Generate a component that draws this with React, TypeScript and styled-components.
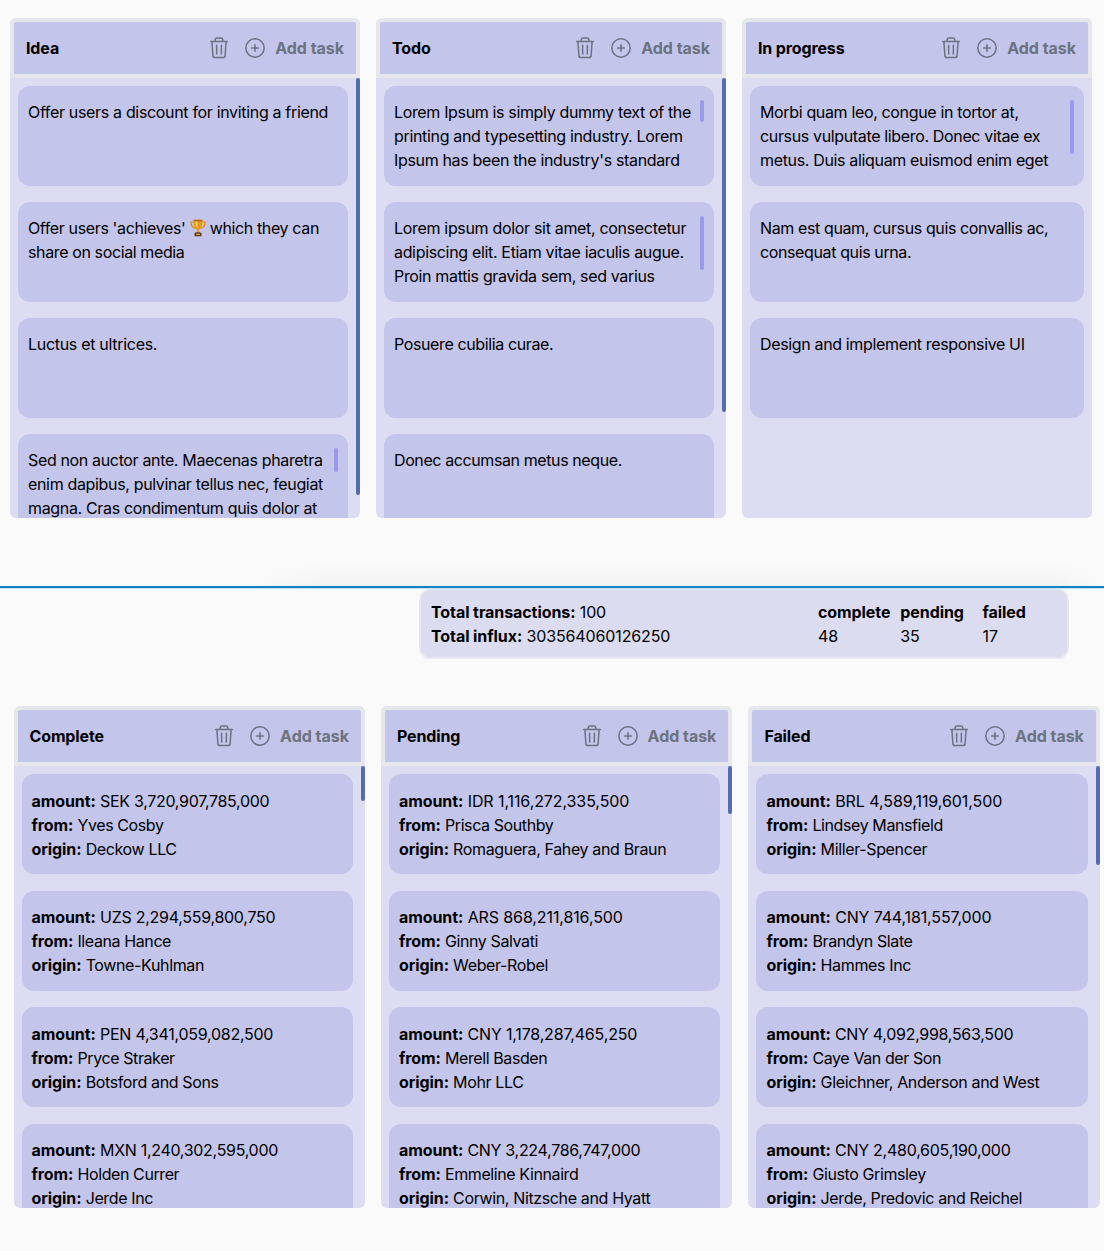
import React from 'react';
import styled, { createGlobalStyle } from 'styled-components';

const GlobalStyle = createGlobalStyle`
  *, *::before, *::after { box-sizing: border-box; }
  body {
    margin: 0;
    background: #fafafa;
    color: #000;
    font-family: Inter, "Liberation Sans", sans-serif;
    font-size: 16px;
    line-height: 24px;
    overflow: hidden;
  }
`;

const Page = styled.main`
  width: 1104px;
  height: 1251px;
  display: flex;
  flex-direction: column;
`;

const Upper = styled.section`
  height: 586px;
  flex: none;
  padding: 17.5px 0 0 10px;
  display: flex;
  flex-direction: column;
  justify-content: space-between;
`;

const Shade = styled.div`
  height: 24px;
  margin-left: 240px;
  background: linear-gradient(to right, #fafafa, rgba(250, 250, 250, 0) 9%, rgba(250, 250, 250, 0) 94%, #fafafa),
    linear-gradient(to bottom, #fafafa, #f7f7f7 50%, #f2f2f2);
`;

const Divider = styled.hr`
  flex: none;
  width: 100%;
  height: 3px;
  margin: 0;
  border: 0;
  border-bottom: 1px solid #c4e0f0;
  background: #1482c5;
`;

const Lower = styled.section`
  display: flex;
  flex-direction: column;
`;

const Board = styled.div<{ $gap: number }>`
  display: flex;
  gap: ${(p) => p.$gap}px;
`;

const LowerBoard = styled(Board)`
  padding: 47px 0 0 13.5px;
`;

const ColumnBox = styled.section<{ $w: number; $h: number }>`
  flex: none;
  width: ${(p) => p.$w}px;
  height: ${(p) => p.$h}px;
  display: flex;
  flex-direction: column;
  overflow: hidden;
  border-radius: 6px;
  background: #dcdcf2;
`;

const Head = styled.header`
  flex: none;
  height: 60px;
  display: flex;
  align-items: center;
  padding: 0 12px;
  border: 4px solid #e5e7eb;
  border-radius: 6px 6px 0 0;
  background: #c4c5eb;
  font-weight: 700;
`;

const Title = styled.h2`
  flex: 1;
  margin: 0;
  font-size: 16px;
  font-weight: 700;
  letter-spacing: -0.13px;
  white-space: nowrap;
`;

const IconButton = styled.button`
  display: flex;
  padding: 0;
  border: 0;
  background: none;
  color: #6b7280;
`;

const AddButton = styled(IconButton)`
  align-items: center;
  gap: 8px;
  margin-left: 12px;
  font: inherit;
  letter-spacing: -0.03px;
  white-space: nowrap;
`;

const Glyph = styled.svg`
  width: 24px;
  height: 24px;
  fill: none;
  stroke: currentColor;
  stroke-width: 1.5;
  stroke-linecap: round;
  stroke-linejoin: round;
`;

const Body = styled.div`
  flex: 1;
  min-height: 0;
  position: relative;
  overflow: hidden;
`;

const Cards = styled.div<{ $gap: number; $bar: boolean }>`
  display: flex;
  flex-direction: column;
  gap: ${(p) => p.$gap}px;
  padding: 8px ${(p) => (p.$bar ? 12 : 8)}px 0 8px;
`;

const Thumb = styled.span<{ $h: number }>`
  position: absolute;
  top: 0;
  right: 0;
  width: 4px;
  height: ${(p) => p.$h}px;
  border-radius: 2px;
  background: #566cb1;
`;

const CardBox = styled.article<{ $top: number }>`
  flex: none;
  height: 100px;
  padding: ${(p) => p.$top}px 10px 0;
  border-radius: 12px;
  background: #c4c5eb;
`;

const CardText = styled.div<{ $lh: number }>`
  position: relative;
  height: 72px;
  line-height: ${(p) => p.$lh}px;
`;

const CardThumb = styled(Thumb)`
  background: #9a9bef;
`;

const Line = styled.div<{ $t?: number }>`
  letter-spacing: ${(p) => p.$t ?? -0.35}px;
  white-space: nowrap;
`;

const Label = styled.b`
  font-weight: 700;
  letter-spacing: -0.08px;
`;

const Trophy = styled.svg`
  width: 16px;
  height: 18px;
  vertical-align: -3px;
`;

const Summary = styled.section`
  width: 650px;
  height: 70px;
  margin-left: 419px;
  padding: 10px 10px;
  display: grid;
  grid-template-columns: 387px 82.3px 82.3px 60px;
  border: 2px solid #e8e8ee;
  border-top-width: 1px;
  border-radius: 11px;
  background: #dcdcf0;
`;

const TrashIcon = () => (
  <Glyph viewBox="0 0 24 24">
    <path d="M3.700 5.400H20.300M8.200 5.200V4.100C8.200 2.800 8.900 2.100 10.100 2.100h3.800c1.200 0 1.900.7 1.900 2v1.100M4.900 5.600l1 14c.1 1.200.9 2 2.100 2h8c1.200 0 2-.8 2.100-2L19.100 5.600M9.600 9.200l.1 8.700M14.400 9.200l-.1 8.700" />
  </Glyph>
);

const PlusIcon = () => (
  <Glyph viewBox="0 0 24 24">
    <circle cx="12" cy="12" r="9.200" />
    <path d="M12 8.700v6.600M8.700 12h6.600" />
  </Glyph>
);

const TrophyIcon = () => (
  <Trophy viewBox="0 0 16 18">
    <path d="M4 3H1c0 4 1.500 6 4.500 6.500M12 3h3c0 4-1.500 6-4.500 6.500" fill="none" stroke="#d98a12" strokeWidth="1.200" />
    <path d="M3.300 1.300h9.400c0 5-1 8.200-3.600 9.200v2.500H6.900v-2.500C4.300 9.500 3.300 6.300 3.300 1.300z" fill="#e99a14" />
    <path d="M5.500 2c0 3 .4 5.500 1.800 7V2z" fill="#ffd65a" />
    <ellipse cx="8" cy="1.500" rx="4.700" ry="0.900" fill="#b96b10" />
    <path d="M4.500 17.200v-3l1.500-1h4l1.500 1v3z" fill="#5b3a20" />
    <path d="M6.200 14.700h3.600v1.300H6.200z" fill="#e8ad35" />
  </Trophy>
);

type TextLine = [React.ReactNode, number?];
type Card = { lines: TextLine[]; thumb?: number };
type ColumnData = { title: string; thumb?: number; cards: Card[] };

const tasks: ColumnData[] = [
  {
    title: 'Idea',
    thumb: 417,
    cards: [
      { lines: [['Offer users a discount for inviting a friend', -0.33]] },
      { lines: [[<>Offer users 'achieves' <TrophyIcon /> which they can</>, -0.37], ['share on social media', -0.38]] },
      { lines: [['Luctus et ultrices.', -0.3]] },
      {
        thumb: 24,
        lines: [
          ['Sed non auctor ante. Maecenas pharetra'],
          ['enim dapibus, pulvinar tellus nec, feugiat', -0.34],
          ['magna. Cras condimentum quis dolor at', -0.34],
        ],
      },
    ],
  },
  {
    title: 'Todo',
    thumb: 334,
    cards: [
      {
        thumb: 22,
        lines: [
          ['Lorem Ipsum is simply dummy text of the'],
          ['printing and typesetting industry. Lorem', -0.33],
          ["Ipsum has been the industry's standard", -0.34],
        ],
      },
      {
        thumb: 54,
        lines: [
          ['Lorem ipsum dolor sit amet, consectetur', -0.32],
          ['adipiscing elit. Etiam vitae iaculis augue.', -0.33],
          ['Proin mattis gravida sem, sed varius', -0.34],
        ],
      },
      { lines: [['Posuere cubilia curae.', -0.38]] },
      { lines: [['Donec accumsan metus neque.', -0.4]] },
    ],
  },
  {
    title: 'In progress',
    cards: [
      {
        thumb: 54,
        lines: [
          ['Morbi quam leo, congue in tortor at,'],
          ['cursus vulputate libero. Donec vitae ex'],
          ['metus. Duis aliquam euismod enim eget', -0.34],
        ],
      },
      { lines: [['Nam est quam, cursus quis convallis ac,', -0.38], ['consequat quis urna.', -0.38]] },
      { lines: [['Design and implement responsive UI', -0.35]] },
    ],
  },
];

const payment = (amount: string, from: string, origin: string, amountSpacing = -0.3): Card => ({
  lines: [
    [<><Label>amount:</Label> {amount}</>, amountSpacing],
    [<><Label>from:</Label> {from}</>, -0.4],
    [<><Label>origin:</Label> {origin}</>, -0.36],
  ],
});

const payments: ColumnData[] = [
  {
    title: 'Complete',
    thumb: 35,
    cards: [
      payment('SEK 3,720,907,785,000', 'Yves Cosby', 'Deckow LLC'),
      payment('UZS 2,294,559,800,750', 'Ileana Hance', 'Towne-Kuhlman', -0.27),
      payment('PEN 4,341,059,082,500', 'Pryce Straker', 'Botsford and Sons', -0.26),
      payment('MXN 1,240,302,595,000', 'Holden Currer', 'Jerde Inc'),
    ],
  },
  {
    title: 'Pending',
    thumb: 48,
    cards: [
      payment('IDR 1,116,272,335,500', 'Prisca Southby', 'Romaguera, Fahey and Braun', -0.09),
      payment('ARS 868,211,816,500', 'Ginny Salvati', 'Weber-Robel', -0.11),
      payment('CNY 1,178,287,465,250', 'Merell Basden', 'Mohr LLC', -0.18),
      payment('CNY 3,224,786,747,000', 'Emmeline Kinnaird', 'Corwin, Nitzsche and Hyatt'),
    ],
  },
  {
    title: 'Failed',
    thumb: 99,
    cards: [
      payment('BRL 4,589,119,601,500', 'Lindsey Mansfield', 'Miller-Spencer', -0.06),
      payment('CNY 744,181,557,000', 'Brandyn Slate', 'Hammes Inc', -0.14),
      payment('CNY 4,092,998,563,500', 'Caye Van der Son', 'Gleichner, Anderson and West'),
      payment('CNY 2,480,605,190,000', 'Giusto Grimsley', 'Jerde, Predovic and Reichel', -0.25),
    ],
  },
];

type ColumnProps = { data: ColumnData; w: number; h: number; gap: number; lh: number; top: number };

const Column = ({ data, w, h, gap, lh, top }: ColumnProps) => (
  <ColumnBox $w={w} $h={h}>
    <Head>
      <Title>{data.title}</Title>
      <IconButton aria-label="Delete column"><TrashIcon /></IconButton>
      <AddButton><PlusIcon />Add task</AddButton>
    </Head>
    <Body>
      <Cards $gap={gap} $bar={data.thumb !== undefined}>
        {data.cards.map((card, i) => (
          <CardBox key={i} $top={top}>
            <CardText $lh={lh}>
              {card.lines.map(([text, t], j) => <Line key={j} $t={t}>{text}</Line>)}
              {card.thumb && <CardThumb $h={card.thumb} />}
            </CardText>
          </CardBox>
        ))}
      </Cards>
      {data.thumb && <Thumb $h={data.thumb} />}
    </Body>
  </ColumnBox>
);

const App = () => (
  <>
    <GlobalStyle />
    <Page>
      <Upper>
        <Board $gap={16}>
          {tasks.map((c) => <Column key={c.title} data={c} w={350} h={500} gap={16} lh={24} top={14} />)}
        </Board>
        <Shade />
      </Upper>
      <Divider />
      <Lower>
        <Summary>
          <div>
            <Line $t={-0.15}><Label>Total transactions:</Label> 100</Line>
            <Line $t={-0.13}><Label>Total influx:</Label> 303564060126250</Line>
          </div>
          <div><Line><Label>complete</Label></Line><Line $t={-0.15}>48</Line></div>
          <div><Line><Label>pending</Label></Line><Line $t={-0.15}>35</Line></div>
          <div><Line><Label>failed</Label></Line><Line $t={-0.15}>17</Line></div>
        </Summary>
        <LowerBoard $gap={16.1}>
          {payments.map((c) => <Column key={c.title} data={c} w={351.4} h={502} gap={16.5} lh={24.2} top={14.5} />)}
        </LowerBoard>
      </Lower>
    </Page>
  </>
);

export default App;
